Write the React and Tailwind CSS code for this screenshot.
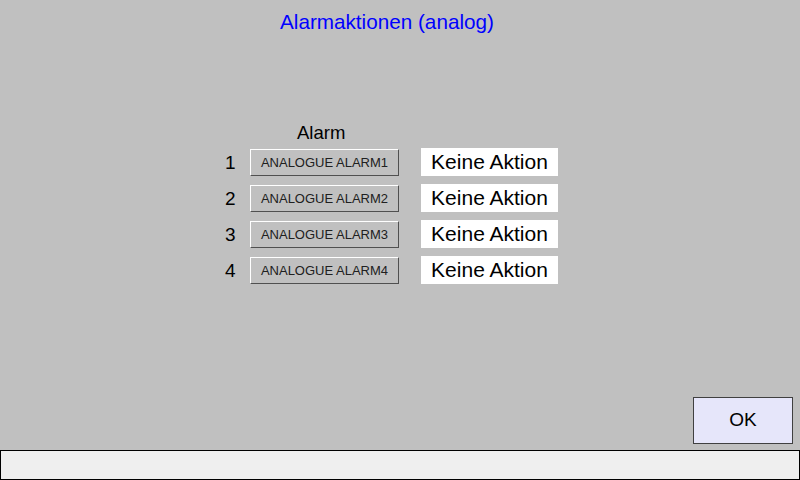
export default function App() {
  const rows = [1, 2, 3, 4];

  return (
    <div
      className="w-[800px] h-[480px] bg-[#c0c0c0] flex flex-col overflow-hidden"
      style={{ fontFamily: '"Liberation Sans", Arial, sans-serif' }}
    >
      {/* Title */}
      <div className="h-[45px] pl-[280px] pt-[9px] text-[20.7px] leading-[26px] text-[#0000ff]">
        Alarmaktionen (analog)
      </div>

      {/* Alarm table */}
      <div className="pl-[222px] pt-[77px] flex flex-col">
        <div className="h-[27px] pl-[75px] text-[18.5px] leading-[22px] text-black">Alarm</div>
        {rows.map((n) => (
          <div key={n} className="h-[36px] flex items-start">
            <div className="w-[28px] h-[28px] flex items-center pl-[3px] text-[19px] text-black">{n}</div>
            <button className="w-[149px] h-[27px] border border-t-white border-l-white border-r-[#505050] border-b-[#505050] bg-[#c0c0c0] text-[13px] text-[#202020] flex items-center justify-center">
              ANALOGUE ALARM{n}
            </button>
            <div className="ml-[22px] -mt-[1px] w-[137px] h-[28px] bg-white flex items-center justify-center text-[21px] text-black">
              Keine Aktion
            </div>
          </div>
        ))}
      </div>

      <div className="flex-1" />

      {/* OK button */}
      <div className="flex justify-end pr-[7px] pb-[6px]">
        <button className="w-[100px] h-[47px] bg-[#e6e6fa] border border-[#404040] text-[19px] text-black flex items-center justify-center">
          OK
        </button>
      </div>

      {/* Status bar */}
      <div className="h-[30px] bg-[#efefef] border border-black" />
    </div>
  );
}
